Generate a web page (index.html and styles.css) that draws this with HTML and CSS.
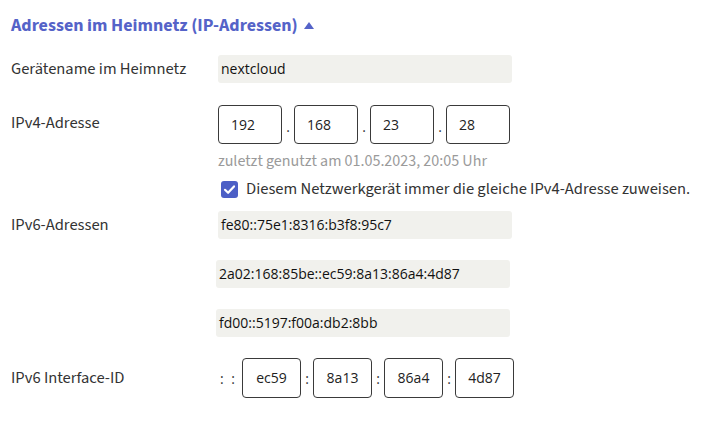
FILE: index.html
```html
<!DOCTYPE html>
<html lang="de">
<head>
<meta charset="utf-8">
<title>Adressen im Heimnetz</title>
<link rel="stylesheet" href="styles.css">
</head>
<body>
<section class="panel">
  <h2 class="heading">Adressen im Heimnetz (IP-Adressen)<span class="caret"></span></h2>

  <div class="row row-name">
    <div class="label">Gerätename im Heimnetz</div>
    <div class="value">
      <div class="field">nextcloud</div>
    </div>
  </div>

  <div class="row row-ipv4">
    <div class="label label-top">IPv4-Adresse</div>
    <div class="value">
      <div class="octets">
        <div class="box">192</div><span class="sep">.</span>
        <div class="box">168</div><span class="sep">.</span>
        <div class="box">23</div><span class="sep">.</span>
        <div class="box">28</div>
      </div>
      <div class="hint">zuletzt genutzt am 01.05.2023, 20:05 Uhr</div>
      <label class="check">
        <span class="checkbox"><svg viewBox="0 0 17 17" width="17" height="17"><path d="M4 8.8 L7.1 11.8 L13 5.4" fill="none" stroke="#fff" stroke-width="2.2" stroke-linecap="round" stroke-linejoin="round"/></svg></span>
        <span>Diesem Netzwerkgerät immer die gleiche IPv4-Adresse zuweisen.</span>
      </label>
    </div>
  </div>

  <div class="row row-ipv6">
    <div class="label label-top6">IPv6-Adressen</div>
    <div class="value ipv6-list">
      <div class="field">fe80::75e1:8316:b3f8:95c7</div>
      <div class="field shift">2a02:168:85be::ec59:8a13:86a4:4d87</div>
      <div class="field shift">fd00::5197:f00a:db2:8bb</div>
    </div>
  </div>

  <div class="row row-iid">
    <div class="label">IPv6 Interface-ID</div>
    <div class="value">
      <div class="octets iid">
        <span class="lead">: :</span>
        <div class="box box6">ec59</div><span class="sep colon">:</span>
        <div class="box box6">8a13</div><span class="sep colon">:</span>
        <div class="box box6">86a4</div><span class="sep colon">:</span>
        <div class="box box6">4d87</div>
      </div>
    </div>
  </div>
</section>
</body>
</html>
```

FILE: styles.css
```css
html, body {
  margin: 0;
  padding: 0;
  background: #ffffff;
}

body {
  font-family: "Source Sans 3", "Source Sans Pro", Lato, "Liberation Sans", sans-serif;
  color: #333333;
}

.panel {
  padding: 14px 0 0 11px;
}

.heading {
  margin: 0;
  font-size: 18px;
  line-height: 24px;
  font-weight: 700;
  color: #5563c8;
  display: flex;
  align-items: center;
}

.caret {
  display: inline-block;
  width: 0;
  height: 0;
  margin-left: 6px;
  border-left: 5px solid transparent;
  border-right: 5px solid transparent;
  border-bottom: 7px solid #5563c8;
  position: relative;
  top: -1px;
}

.row {
  display: flex;
  align-items: center;
}

.label {
  width: 207px;
  flex: none;
  font-size: 16.5px;
  line-height: 20px;
  color: #333333;
}

.row-name {
  margin-top: 17px;
}

.row-ipv4 {
  margin-top: 20px;
  align-items: flex-start;
}

.label-top {
  padding-top: 10px;
}

.row-ipv6 {
  margin-top: 12px;
  align-items: flex-start;
}

.label-top6 {
  padding-top: 4px;
}

.row-iid {
  margin-top: 21px;
}

.field {
  width: 294px;
  height: 28px;
  box-sizing: border-box;
  background: #f1f1ed;
  border-radius: 3px;
  padding-left: 3px;
  font-family: "Open Sans", "Liberation Sans", sans-serif;
  font-size: 14px;
  line-height: 28px;
  color: #111111;
}

.ipv6-list {
  display: flex;
  flex-direction: column;
  gap: 21px;
}

.field.shift {
  margin-left: -2px;
}

.octets {
  display: flex;
  align-items: center;
}

.box {
  width: 64px;
  height: 39px;
  box-sizing: border-box;
  border: 1px solid #3a3a3a;
  border-radius: 4px;
  padding-left: 12px;
  font-family: "Open Sans", "Liberation Sans", sans-serif;
  font-size: 14px;
  line-height: 37px;
  color: #222222;
}

.sep {
  width: 12px;
  text-align: center;
  font-family: "Open Sans", "Liberation Sans", sans-serif;
  font-size: 14px;
  line-height: 39px;
  color: #333333;
  padding-top: 4px;
}

.iid .box6 {
  width: 59px;
  height: 40px;
  line-height: 38px;
  padding-left: 0;
  text-align: center;
}

.colon {
  padding-top: 0;
}

.lead {
  width: 24px;
  padding-left: 2px;
  box-sizing: border-box;
  font-family: "Open Sans", "Liberation Sans", sans-serif;
  font-size: 14px;
  color: #333333;
  letter-spacing: 2px;
}

.hint {
  margin-top: 5px;
  font-size: 16px;
  line-height: 20px;
  color: #9a9a9a;
}

.check {
  display: flex;
  align-items: center;
  margin-top: 8px;
  font-size: 16.5px;
  line-height: 20px;
  color: #333333;
}

.checkbox {
  display: inline-flex;
  width: 17px;
  height: 17px;
  margin-left: 3px;
  margin-right: 8px;
  border-radius: 3px;
  background: #4c5fc6;
}
```
